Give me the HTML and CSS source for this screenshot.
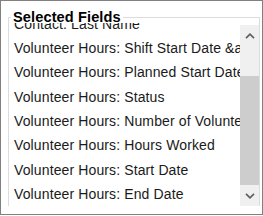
FILE: index.html
```
<!DOCTYPE html>
<html lang="en">

<head>
    <meta charset="UTF-8">
    <title>Selected Fields</title>
    <link rel="stylesheet" href="styles.css">
</head>

<body>

    <div class="frame">
        <fieldset class="fields-box">
            <legend>Selected Fields</legend>
            <div class="listbox">
                <div class="list">
                    <ul class="items">
                        <li>Contact: Last Name</li>
                        <li>Volunteer Hours: Shift Start Date &amp;amp; Time</li>
                        <li>Volunteer Hours: Planned Start Date &amp;amp; Time</li>
                        <li>Volunteer Hours: Status</li>
                        <li>Volunteer Hours: Number of Volunteers</li>
                        <li>Volunteer Hours: Hours Worked</li>
                        <li>Volunteer Hours: Start Date</li>
                        <li>Volunteer Hours: End Date</li>
                    </ul>
                </div>
                <!-- fake scrollbar, scrolled to the bottom -->
                <div class="scrollbar">
                    <div class="sb-btn">
                        <svg width="10" height="6" viewBox="0 0 10 6"><polyline points="1,5.2 5,1.2 9,5.2" fill="none" stroke="#606060" stroke-width="1.7"/></svg>
                    </div>
                    <div class="sb-track">
                        <div class="sb-thumb"></div>
                    </div>
                    <div class="sb-btn">
                        <svg width="10" height="6" viewBox="0 0 10 6"><polyline points="1,0.8 5,4.8 9,0.8" fill="none" stroke="#606060" stroke-width="1.7"/></svg>
                    </div>
                </div>
            </div>
        </fieldset>
    </div>

</body>

</html>
```

FILE: styles.css
```
body, html {
    margin: 0;
    padding: 0;
    background: white;
    font-family: "Liberation Sans", Arial, sans-serif;
}

.frame {
    width: 263px;
    height: 215px;
    box-sizing: border-box;
    border: 1px solid #808080;
    padding: 8px 2px 0 7px;
    background: white;
}

.fields-box {
    margin: 0;
    padding: 0;
    min-width: 0;
    border: 1px solid #dcdcdc;
    border-bottom: none;
}

.fields-box legend {
    margin-left: 2px;
    padding: 0 2px;
    font-size: 14.6px;
    font-weight: bold;
    line-height: 16px;
    letter-spacing: 0.1px;
    color: #000;
}

.listbox {
    display: flex;
    margin-top: -2px;
    height: 183.33px;
}

.list {
    flex: 1;
    overflow: hidden;
}

.items {
    list-style: none;
    margin: -11.3px 0 0 0;
    padding: 0;
}

.items li {
    height: 24.33px;
    line-height: 24.33px;
    padding-left: 5px;
    font-size: 14px;
    letter-spacing: 0.12px;
    color: #1a1a1a;
    white-space: nowrap;
}

.scrollbar {
    width: 19px;
    margin-top: 2px;
    background-color: #f0f0f0;
    display: flex;
    flex-direction: column;
}

.sb-btn {
    height: 21px;
    display: flex;
    justify-content: center;
    align-items: center;
}

.sb-track {
    flex: 1;
}

.sb-thumb {
    margin-top: 30px;
    height: 109px;
    background-color: #cdcdcd;
}
```
